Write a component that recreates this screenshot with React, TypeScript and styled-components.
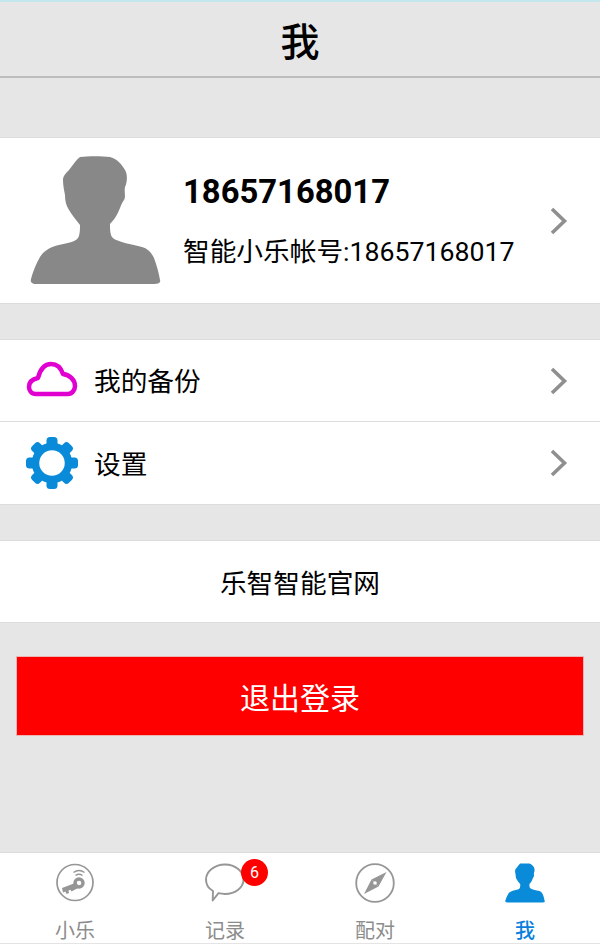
import React from "react";
import styled, { createGlobalStyle } from "styled-components";

const FONT = `"Roboto", "Noto Sans CJK SC", sans-serif`;

const GlobalStyle = createGlobalStyle`
  html, body {
    margin: 0;
    padding: 0;
    background: #e6e6e6;
  }
  * {
    box-sizing: border-box;
  }
`;

const PERSON_PATH =
  "M50 1 C58 0 72 0 80 1 C88 3 92 9 95 14 C98 19 97 27 95 31 C94 35 96 41 94 44 C92 47 91 49 90 52 C87 60 83 65 80 68 C80 72 80 78 82 81 C85 85 95 87 112 91 C119 93 122 98 124 102 C127 110 129 118 130 124 C131 127 128 128 125 128 L7 128 C3 128 0 127 1 123 C3 115 6 108 10 101 C13 96 17 93 25 90 C35 87 44 87 48 82 C50 79 50 73 50 69 C46 64 42 59 39 54 C36 49 35 45 35 39 C34 34 33 29 33 24 C33 20 36 17 39 14 C43 9 46 4 50 1 Z";

const Chevron = () => (
  <ChevronIcon viewBox="0 0 18 28">
    <path d="M2 2 L14.5 14 L2 26" fill="none" stroke="#8f8f8f" strokeWidth="3.6" />
  </ChevronIcon>
);

const CloudIcon = () => (
  <CloudSvg viewBox="0 0 52 36">
    <path
      d="M10 33 C5 33 3 29 3 26 C3 21 7 18 12 17 C14 9 18 3 25 3 C31 3 35 7 37 13 C44 14 49 19 49 25 C49 29 46 33 42 33 Z"
      fill="none"
      stroke="#e000d0"
      strokeWidth="4.5"
      strokeLinejoin="round"
    />
  </CloudSvg>
);

const GearIcon = () => (
  <RowIcon viewBox="0 0 52 52">
    <g fill="#0a8bd9">
      {[0, 45, 90, 135, 180, 225, 270, 315].map((a) => (
        <rect key={a} x="20.5" y="0" width="11" height="11" rx="3.5" transform={`rotate(${a} 26 26)`} />
      ))}
    </g>
    <circle cx="26" cy="26" r="16.5" fill="none" stroke="#0a8bd9" strokeWidth="7.5" />
  </RowIcon>
);

const KeyIcon = () => (
  <TabIcon viewBox="0 0 40 40">
    <circle cx="20" cy="19.5" r="18" fill="none" stroke="#969696" strokeWidth="1.7" />
    <g fill="none" stroke="#969696">
      <circle cx="24" cy="20" r="4" strokeWidth="3.4" />
      <path d="M20.5 12.5 A6 6 0 0 1 27.5 12.5" strokeWidth="1.5" />
      <path d="M18.5 9.5 A9.5 9.5 0 0 1 29.5 9.5" strokeWidth="1.5" />
    </g>
    <path
      d="M21.5 19.5 L7 25 L8 29.5 L10.5 28.5 L11.5 31 L14 30 L13.5 27.5 L15.5 26.7 L16.5 28.5 L24 24.5 Z"
      fill="#969696"
    />
  </TabIcon>
);

const BubbleIcon = () => (
  <TabIcon viewBox="0 0 40 40">
    <path
      d="M20 1.5 C30.5 1.5 38.5 8.5 38.5 16.5 C38.5 24.5 30.5 31 20 31 C17.5 31 15.5 30.7 13.5 30.2 L7.7 37.5 L8 28 C3.5 25.5 1 21 1 16.5 C1 8.5 9.5 1.5 20 1.5 Z"
      fill="none"
      stroke="#969696"
      strokeWidth="1.9"
      strokeLinejoin="round"
    />
  </TabIcon>
);

const CompassIcon = () => (
  <TabIcon viewBox="0 0 40 40">
    <circle cx="20" cy="20" r="18.8" fill="none" stroke="#969696" strokeWidth="1.8" />
    <path d="M31.5 9 L23.5 23.5 L16.5 16.5 Z" fill="#969696" />
    <path d="M9 31 L16.5 16.5 L23.5 23.5 Z" fill="#969696" />
    <circle cx="20" cy="20" r="1.8" fill="#fff" />
  </TabIcon>
);

const MeIcon = () => (
  <TabIcon viewBox="0 0 131 129">
    <path d={PERSON_PATH} fill="#0a8bd9" />
  </TabIcon>
);

const App = () => {
  return (
    <Page>
      <GlobalStyle />
      <Header>我</Header>

      <ProfileCard>
        <Avatar viewBox="0 0 131 129">
          <path d={PERSON_PATH} fill="#888888" />
        </Avatar>
        <ProfileText>
          <Phone>18657168017</Phone>
          <Account>智能小乐帐号:18657168017</Account>
        </ProfileText>
        <Chevron />
      </ProfileCard>

      <MenuGroup>
        <MenuRow>
          <CloudIcon />
          <RowLabel>我的备份</RowLabel>
          <Chevron />
        </MenuRow>
        <MenuRow>
          <GearIcon />
          <RowLabel>设置</RowLabel>
          <Chevron />
        </MenuRow>
      </MenuGroup>

      <SiteRow>乐智智能官网</SiteRow>

      <LogoutButton>退出登录</LogoutButton>

      <Spacer />

      <TabBar>
        <Tab>
          <KeyIcon />
          <TabLabel>小乐</TabLabel>
        </Tab>
        <Tab>
          <IconWrap>
            <BubbleIcon />
            <Badge>6</Badge>
          </IconWrap>
          <TabLabel>记录</TabLabel>
        </Tab>
        <Tab>
          <CompassIcon />
          <TabLabel>配对</TabLabel>
        </Tab>
        <Tab>
          <MeIcon />
          <TabLabel active>我</TabLabel>
        </Tab>
      </TabBar>
    </Page>
  );
};

export default App;

const Page = styled.div`
  width: 600px;
  height: 944px;
  display: flex;
  flex-direction: column;
  background-color: #e6e6e6;
  font-family: ${FONT};
  color: #000;
  overflow: hidden;
`;

const Header = styled.div`
  height: 78px;
  display: flex;
  justify-content: center;
  align-items: center;
  font-size: 39px;
  font-weight: 500;
  border-top: 2px solid #c4e6ee;
  border-bottom: 2px solid #bdbdbd;
`;

const ProfileCard = styled.div`
  height: 167px;
  margin-top: 59px;
  padding: 0 32px 0 30px;
  display: flex;
  align-items: center;
  background-color: #fff;
  border-top: 1px solid #dcdcdc;
  border-bottom: 1px solid #dcdcdc;
`;

const Avatar = styled.svg`
  width: 131px;
  height: 129px;
  flex-shrink: 0;
`;

const ProfileText = styled.div`
  flex: 1;
  min-width: 0;
  margin-left: 22px;
  display: flex;
  flex-direction: column;
`;

const Phone = styled.div`
  font-size: 32.8px;
  font-weight: 700;
  line-height: 40px;
`;

const Account = styled.div`
  margin-top: 22px;
  font-size: 26.7px;
  line-height: 36px;
  white-space: nowrap;
`;

const ChevronIcon = styled.svg`
  width: 18px;
  height: 28px;
  margin-left: auto;
  flex-shrink: 0;
`;

const MenuGroup = styled.div`
  margin-top: 35px;
  background-color: #fff;
  border-top: 1px solid #dcdcdc;
  border-bottom: 1px solid #dcdcdc;
`;

const MenuRow = styled.div`
  height: 81px;
  padding: 0 32px 0 26px;
  display: flex;
  align-items: center;

  & + & {
    height: 83px;
    border-top: 1px solid #dcdcdc;
  }
`;

const RowIcon = styled.svg`
  width: 52px;
  height: 52px;
  flex-shrink: 0;
`;

const CloudSvg = styled.svg`
  width: 52px;
  height: 36px;
  margin-bottom: 4px;
  flex-shrink: 0;
`;

const RowLabel = styled.div`
  margin-left: 16px;
  margin-bottom: 2px;
  font-size: 26.7px;
`;

const SiteRow = styled.div`
  height: 83px;
  margin-top: 35px;
  display: flex;
  justify-content: center;
  align-items: center;
  background-color: #fff;
  font-size: 26.7px;
  border-top: 1px solid #dcdcdc;
  border-bottom: 1px solid #dcdcdc;
`;

const LogoutButton = styled.div`
  height: 80px;
  margin: 33px 16px 0;
  display: flex;
  justify-content: center;
  align-items: center;
  background-color: #ff0000;
  color: #fff;
  font-size: 30px;
  border: 1px solid #eeb5b5;
`;

const Spacer = styled.div`
  flex: 1;
`;

const TabBar = styled.div`
  height: 92px;
  display: grid;
  grid-template-columns: repeat(4, 150px);
  background-color: #fff;
  border-top: 1px solid #dcdcdc;
  border-bottom: 1px solid #e4e4e4;
`;

const Tab = styled.div`
  display: flex;
  flex-direction: column;
  align-items: center;
  padding-top: 10px;
`;

const IconWrap = styled.div`
  position: relative;
  width: 40px;
  height: 40px;
`;

const TabIcon = styled.svg`
  display: block;
  width: 40px;
  height: 40px;
`;

const Badge = styled.div`
  position: absolute;
  top: -4px;
  right: -23px;
  width: 27px;
  height: 27px;
  border-radius: 50%;
  display: flex;
  justify-content: center;
  align-items: center;
  background-color: #ff0000;
  color: #fff;
  font-size: 16px;
`;

const TabLabel = styled.div<{ active?: boolean }>`
  margin-top: 14px;
  font-size: 20px;
  line-height: 28px;
  font-weight: ${(props) => (props.active ? 500 : 400)};
  color: ${(props) => (props.active ? "#0a7fdc" : "#8c8c8c")};
`;
